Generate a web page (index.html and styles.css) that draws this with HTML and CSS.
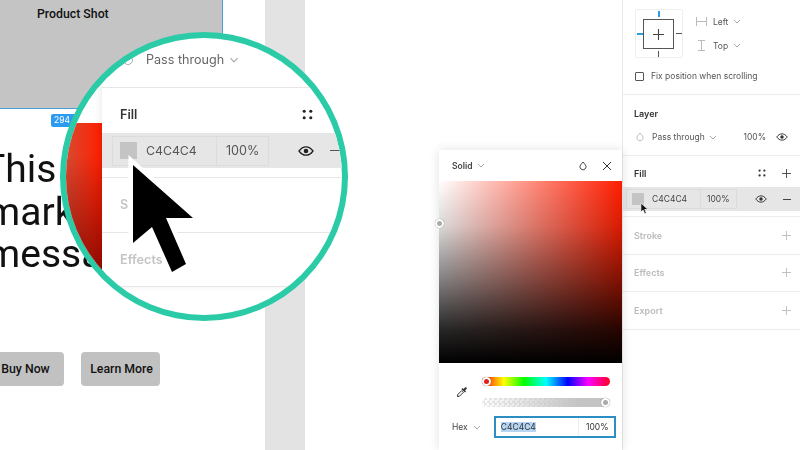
FILE: index.html
```html
<!DOCTYPE html>
<html lang="en">
<head>
<meta charset="UTF-8">
<title>Fill colour picker</title>
<link rel="stylesheet" href="styles.css">
</head>
<body>
  <svg class="defs" width="0" height="0">
    <symbol id="eye" viewBox="0 0 16 10">
      <path d="M1 5c2-2.800 4.400-4.200 7-4.200S13 2.200 15 5c-2 2.800-4.400 4.200-7 4.200S3 7.800 1 5z" fill="none" stroke="currentColor" stroke-width="1.300"/>
      <circle cx="8" cy="5" r="2.300" fill="currentColor"/>
    </symbol>
    <symbol id="dots" viewBox="0 0 10 10">
      <circle cx="2" cy="2" r="1.400" fill="currentColor"/>
      <circle cx="8" cy="2" r="1.400" fill="currentColor"/>
      <circle cx="2" cy="8" r="1.400" fill="currentColor"/>
      <circle cx="8" cy="8" r="1.400" fill="currentColor"/>
    </symbol>
    <symbol id="plus" viewBox="0 0 10 10">
      <path d="M5 0v10M0 5h10" stroke="currentColor" stroke-width="1" fill="none"/>
    </symbol>
    <symbol id="chev" viewBox="0 0 8 5">
      <path d="M1 1l3 3 3-3" stroke="currentColor" stroke-width="1" fill="none"/>
    </symbol>
    <symbol id="drop" viewBox="0 0 10 12">
      <path d="M5 1l3 3.600a3.800 3.800 0 1 1-6 0z" fill="none" stroke="currentColor" stroke-width="1.200"/>
    </symbol>
  </svg>

  <div class="stage">
    <!-- design on the canvas -->
    <div class="hero-shot"><span>Product Shot</span></div>
    <div class="size-tag">294</div>
    <div class="hero-text">
      <div class="hero-first">This is a</div>
      <div>marketing</div>
      <div>message</div>
    </div>
    <div class="btn btn-buy">Buy Now</div>
    <div class="btn btn-learn">Learn More</div>
    <div class="strip"></div>

    <!-- colour picker -->
    <div class="picker">
      <div class="picker-head">
        <span class="picker-type">Solid</span>
        <svg class="chev chev-solid"><use href="#chev"/></svg>
        <svg class="picker-drop"><use href="#drop"/></svg>
        <svg class="picker-close" viewBox="0 0 10 10"><path d="M1 1l8 8M9 1l-8 8" stroke="#333" stroke-width="1" fill="none"/></svg>
      </div>
      <div class="picker-field"></div>
      <div class="picker-controls">
        <svg class="dropper" viewBox="0 0 12 12"><path d="M1.500 10.500l.3-2 4-4 1.700 1.700-4 4z" fill="none" stroke="#333" stroke-width="1"/><path d="M5.500 3l1-1 1 1 1.500-1.500a1 1 0 0 1 1.500 1.500L9 4.500l1 1-1 1z" fill="#333"/></svg>
        <div class="sliders">
          <div class="slider hue"><i class="thumb thumb-hue"></i></div>
          <div class="slider alpha"><i class="thumb thumb-alpha"></i></div>
        </div>
      </div>
      <div class="hex-row">
        <span class="hex-label">Hex</span>
        <svg class="chev chev-hex"><use href="#chev"/></svg>
        <div class="hex-input">
          <span class="hex-value"><mark>C4C4C4</mark></span>
          <span class="hex-pct">100%</span>
        </div>
      </div>
    </div>
    <i class="thumb thumb-field"></i>

    <!-- properties panel -->
    <aside class="panel">
      <section class="constraints">
        <div class="constraint-row">
          <div class="constraint-box">
            <div class="constraint-inner">
              <svg viewBox="0 0 11 11"><use href="#plus"/></svg>
            </div>
            <i class="tick tick-top"></i>
            <i class="tick tick-left"></i>
            <i class="tick tick-right"></i>
            <i class="tick tick-bottom"></i>
          </div>
          <div class="constraint-opts">
            <div class="opt"><svg class="opt-icon" viewBox="0 0 11 9"><path d="M.5 0v9M10.500 0v9M.5 4.500h10" stroke="#bbb" fill="none"/></svg>Left<svg class="chev"><use href="#chev"/></svg></div>
            <div class="opt"><svg class="opt-icon" viewBox="0 0 9 11"><path d="M1 .5h7M1 10.500h7M4.500 .5v10" stroke="#bbb" fill="none"/></svg>Top<svg class="chev"><use href="#chev"/></svg></div>
          </div>
        </div>
        <label class="fix"><i class="check"></i>Fix position when scrolling</label>
      </section>

      <section class="layer">
        <h3>Layer</h3>
        <div class="layer-row">
          <svg class="layer-drop"><use href="#drop"/></svg>
          <span class="layer-mode">Pass through</span>
          <svg class="chev"><use href="#chev"/></svg>
          <span class="layer-pct">100%</span>
          <svg class="eye"><use href="#eye"/></svg>
        </div>
      </section>

      <section class="fill">
        <div class="sec-head">
          <h3>Fill</h3>
          <svg class="dots"><use href="#dots"/></svg>
          <svg class="plus"><use href="#plus"/></svg>
        </div>
        <div class="fill-row">
          <div class="fill-input">
            <i class="swatch"></i>
            <span class="fill-hex">C4C4C4</span>
            <span class="fill-pct">100%</span>
          </div>
          <svg class="eye"><use href="#eye"/></svg>
          <i class="minus"></i>
        </div>
      </section>

      <section class="sec-empty"><h3>Stroke</h3><svg class="plus"><use href="#plus"/></svg></section>
      <section class="sec-empty"><h3>Effects</h3><svg class="plus"><use href="#plus"/></svg></section>
      <section class="sec-empty"><h3>Export</h3><svg class="plus"><use href="#plus"/></svg></section>
    </aside>

    <svg class="mini-cursor" viewBox="0 0 10 14"><path d="M1 1v10l2.500-2.200 1.700 4 1.800-.8-1.700-3.900H9z" fill="#111" stroke="#fff" stroke-width=".8"/></svg>

    <!-- magnifier -->
    <div class="lens">
      <div class="lens-red"></div>
      <div class="lens-panel">
        <div class="lens-top">
          <i class="lens-ring"></i>
          <span>Pass through</span>
          <svg class="lens-chev"><use href="#chev"/></svg>
          <i class="lens-mark"></i>
        </div>
        <div class="lens-fill">
          <div class="lens-head">
            <b>Fill</b>
            <svg class="lens-dots"><use href="#dots"/></svg>
          </div>
          <div class="lens-row">
            <div class="lens-input">
              <i class="lens-swatch"></i>
              <span class="lens-hex">C4C4C4</span>
              <span class="lens-pct">100%</span>
            </div>
            <svg class="lens-eye"><use href="#eye"/></svg>
            <i class="lens-minus"></i>
          </div>
        </div>
        <div class="lens-sec">S</div>
        <div class="lens-sec">Effects</div>
      </div>
    </div>
    <svg class="big-cursor" viewBox="122 150 80 130"><path d="M133 165l60 53h-27l20 46-14 8-20-45-19 16z" fill="#000" stroke="#fff" stroke-width="9" paint-order="stroke"/></svg>
  </div>
</body>
</html>
```

FILE: styles.css
```css
* { box-sizing: border-box; }
html, body {
  margin: 0;
  height: 100%;
  background: #fff;
}
body {
  font-family: "Inter", "Liberation Sans", sans-serif;
  overflow: hidden;
}
.defs { position: absolute; }
.stage {
  position: relative;
  width: 800px;
  height: 450px;
  overflow: hidden;
  display: flex;
  justify-content: flex-end;
  filter: blur(0.35px);
}
h3 { margin: 0; font-size: 9px; font-weight: 600; }

/* canvas objects */
.hero-shot {
  position: absolute;
  left: 0;
  top: 0;
  width: 223px;
  height: 109px;
  background: #c4c4c4;
  border-right: 1px solid #4a9fd8;
  border-bottom: 1px solid #4a9fd8;
  padding: 7px 0 0 37px;
  font: 500 12.300px "Roboto", sans-serif;
  color: #111;
}
.size-tag {
  position: absolute;
  left: 51px;
  top: 114px;
  width: 28px;
  height: 13px;
  background: #2d9bf0;
  border-radius: 2px;
  color: #fff;
  font-size: 8.500px;
  line-height: 13px;
  padding-left: 3px;
}
.hero-text {
  position: absolute;
  left: -14px;
  top: 148px;
  font: 400 39px/42.500px "Roboto", sans-serif;
  color: #111;
  white-space: nowrap;
}
.hero-first { margin-left: -4px; }
.btn {
  position: absolute;
  top: 352px;
  height: 34px;
  background: #c1c1c1;
  border-radius: 4px;
  font: 500 12.300px/34px "Roboto", sans-serif;
  color: #111;
  text-align: center;
}
.btn-buy { left: -15px; width: 79px; padding-left: 2px; }
.btn-learn { left: 81px; width: 79px; padding-left: 2px; }
.strip {
  position: absolute;
  left: 265px;
  top: 0;
  width: 40px;
  height: 450px;
  background: #e3e3e3;
}

/* picker */
.picker {
  position: absolute;
  left: 439px;
  top: 150px;
  width: 183px;
  height: 300px;
  background: #fff;
  box-shadow: 0 0 10px rgba(0, 0, 0, 0.12);
  display: flex;
  flex-direction: column;
}
.picker-head {
  height: 31px;
  display: flex;
  align-items: center;
  padding: 0 10px 0 13px;
}
.picker-type { font-size: 8.500px; font-weight: 600; color: #444; }
.chev { width: 8px; height: 5px; color: #aaa; flex: none; }
.chev-solid { margin-left: 5px; }
.picker-drop { width: 8px; height: 10px; margin-left: auto; color: #444; }
.picker-close { width: 10px; height: 10px; margin-left: 15px; }
.picker-field {
  height: 182px;
  background:
    linear-gradient(to bottom, rgba(0, 0, 0, 0), rgba(0, 0, 0, 0.15) 25%, rgba(0, 0, 0, 0.5) 55%, rgba(0, 0, 0, 0.85) 82%, #000),
    linear-gradient(to right, #fff, #ff1e00);
}
.picker-controls {
  display: flex;
  align-items: center;
  padding: 14px 12px 0 17px;
}
.dropper { width: 12px; height: 12px; flex: none; }
.sliders {
  margin-left: 14px;
  flex: 1;
  display: flex;
  flex-direction: column;
  gap: 12px;
}
.slider {
  position: relative;
  height: 9px;
  border-radius: 5px;
}
.hue {
  background: linear-gradient(to right, #f00, #ff0 17%, #0f0 33%, #0ff 50%, #00f 67%, #f0f 83%, #f02);
}
.alpha {
  background:
    linear-gradient(to right, rgba(196, 196, 196, 0), #c4c4c4 75%),
    repeating-conic-gradient(#e8e8e8 0 25%, #fff 0 50%) 0 0 / 5px 5px;
}
.thumb {
  position: absolute;
  width: 9px;
  height: 9px;
  border-radius: 50%;
  border: 2px solid #fff;
  box-shadow: 0 0 1px rgba(0, 0, 0, 0.5);
}
.thumb-hue { left: 0; top: 0; background: #e0201a; }
.thumb-alpha { right: 0; top: 0; background: #aaa; }
.thumb-field { left: 435px; top: 219px; background: #aaa; }
.hex-row {
  display: flex;
  align-items: center;
  margin-top: 9px;
  padding: 0 6px 0 13px;
  height: 22px;
  font-size: 8.500px;
  color: #444;
}
.chev-hex { margin-left: 5px; }
.hex-input {
  margin-left: 13px;
  flex: 1;
  height: 22px;
  border: 2px solid #2c8fc4;
  display: flex;
  align-items: center;
  color: #333;
}
.hex-value { flex: 1; padding-left: 5px; }
.hex-value mark { background: #b5d5f3; color: #333; }
.hex-pct {
  width: 36px;
  height: 100%;
  line-height: 18px;
  border-left: 1px solid #eee;
  padding-left: 7px;
}

/* right panel */
.panel {
  width: 178px;
  height: 450px;
  flex: none;
  border-left: 1px solid #eaeaea;
  color: #333;
  font-size: 8.500px;
}
.panel section { border-bottom: 1px solid #ececec; }
.constraints { height: 95px; padding: 9px 12px 0; }
.constraint-row { display: flex; }
.constraint-box {
  position: relative;
  width: 48px;
  height: 49px;
  border: 1px solid #eee;
  border-radius: 2px;
}
.constraint-inner {
  position: absolute;
  left: 7px;
  top: 9px;
  width: 31px;
  height: 30px;
  border: 1px solid #555;
  display: flex;
  align-items: center;
  justify-content: center;
  color: #444;
}
.constraint-inner svg { width: 11px; height: 11px; }
.tick { position: absolute; background: #555; }
.tick-top { left: 22px; top: 1px; width: 2px; height: 6px; background: #2c9be0; }
.tick-bottom { left: 22px; top: 41px; width: 1px; height: 6px; }
.tick-left { left: 1px; top: 23px; width: 6px; height: 2px; background: #2c9be0; }
.tick-right { left: 40px; top: 23px; width: 6px; height: 1px; }
.constraint-opts {
  margin-left: 13px;
  padding-top: 7px;
  display: flex;
  flex-direction: column;
  gap: 13px;
}
.opt { display: flex; align-items: center; height: 11px; color: #555; }
.opt-icon { width: 11px; height: 11px; margin-right: 6px; }
.opt .chev { margin-left: 5px; }
.fix {
  display: flex;
  align-items: center;
  margin-top: 13px;
  color: #555;
  gap: 7px;
}
.check {
  width: 9px;
  height: 9px;
  border: 1px solid #555;
  border-radius: 1px;
}
.layer { height: 61px; padding: 13px 11px 0; }
.layer-row {
  display: flex;
  align-items: center;
  margin-top: 13px;
  height: 10px;
  color: #555;
}
.layer-drop { width: 8px; height: 10px; margin-left: 2px; color: #bbb; }
.layer-mode { margin-left: 8px; }
.layer-row .chev { margin-left: 4px; }
.layer-pct { margin-left: auto; }
.eye { width: 12px; height: 8px; color: #333; flex: none; }
.layer-row .eye { margin: 0 1px 0 10px; }
.fill { height: 61px; }
.sec-head {
  display: flex;
  align-items: center;
  height: 31px;
  padding: 3px 9px 0 11px;
}
.dots { width: 8px; height: 8px; margin-left: auto; color: #333; }
.plus { width: 9px; height: 9px; color: #444; }
.sec-head .plus { margin-left: 16px; }
.fill-row {
  display: flex;
  align-items: center;
  height: 24px;
  background: #e6e6e6;
  padding: 0 9px 0 3px;
}
.fill-input {
  display: flex;
  align-items: center;
  height: 20px;
  width: 111px;
  border: 1px solid #dcdcdc;
  color: #444;
}
.swatch { width: 12px; height: 12px; margin-left: 5px; background: #c4c4c4; }
.fill-hex { margin-left: 8px; flex: 1; }
.fill-pct {
  width: 36px;
  height: 100%;
  line-height: 18px;
  padding-left: 6px;
  border-left: 1px solid #dcdcdc;
}
.fill-row .eye { margin-left: 18px; }
.minus {
  width: 8px;
  height: 1px;
  margin-left: auto;
  background: #444;
}
.sec-empty {
  height: 37.500px;
  display: flex;
  align-items: center;
  justify-content: space-between;
  padding: 0 9px 0 11px;
  color: #bbb;
}
.sec-empty .plus { color: #bbb; }
.mini-cursor {
  position: absolute;
  left: 640px;
  top: 202px;
  width: 9px;
  height: 13px;
}

/* magnifier */
.lens {
  position: absolute;
  left: 60px;
  top: 32px;
  width: 288px;
  height: 289px;
  border: 6px solid #2ccba7;
  border-radius: 50%;
  background: #fff;
  overflow: hidden;
}
.lens-red {
  position: absolute;
  left: 0;
  top: 85px;
  width: 36px;
  height: 165px;
  background:
    linear-gradient(to bottom, rgba(0, 0, 0, 0) 20%, rgba(100, 0, 0, 0.8)),
    linear-gradient(to right, #d84a30, #ff1e00);
}
.lens-panel {
  position: relative;
  margin-left: 36px;
  box-shadow: -3px 0 6px rgba(0, 0, 0, 0.06);
  color: #555;
  font-size: 12.600px;
}
.lens-top {
  display: flex;
  align-items: center;
  height: 49px;
  padding: 0 0 6px 21px;
  color: #666;
}
.lens-ring {
  width: 10px;
  height: 10px;
  border: 1px solid #aaa;
  border-radius: 50%;
  margin-right: 13px;
  flex: none;
}
.lens-chev { width: 10px; height: 6px; margin-left: 5px; color: #aaa; }
.lens-mark { width: 1px; height: 9px; margin-left: 46px; background: #888; }
.lens-fill {
  height: 90px;
  border-top: 1px solid #e6e6e6;
}
.lens-head {
  display: flex;
  align-items: center;
  height: 45px;
  padding: 8px 0 0 18px;
  color: #333;
}
.lens-head b { font-weight: 600; }
.lens-dots { width: 11px; height: 11px; margin-left: 165px; color: #222; }
.lens-row {
  display: flex;
  align-items: center;
  height: 35px;
  background: #e6e6e6;
  padding-left: 10px;
}
.lens-input {
  display: flex;
  align-items: center;
  width: 158px;
  height: 30px;
  border: 1px solid #dcdcdc;
}
.lens-swatch { width: 17px; height: 17px; margin: -1px 0 0 7px; background: #c4c4c4; flex: none; }
.lens-hex { margin-left: 9px; flex: 1; font-size: 12.300px; }
.lens-pct {
  width: 52px;
  height: 100%;
  line-height: 28px;
  padding-left: 9px;
  border-left: 1px solid #dcdcdc;
}
.lens-eye { width: 16px; height: 10px; margin-left: 29px; color: #222; flex: none; }
.lens-minus { width: 12px; height: 1.500px; margin-left: 16px; background: #555; flex: none; }
.lens-sec {
  height: 55px;
  padding: 19px 0 0 18px;
  border-top: 1px solid #e6e6e6;
  font-weight: 600;
  color: #c4c4c4;
}
.lens-sec:last-child { border-bottom: 1px solid #e6e6e6; }
.big-cursor {
  position: absolute;
  left: 122px;
  top: 150px;
  width: 80px;
  height: 130px;
}
```
